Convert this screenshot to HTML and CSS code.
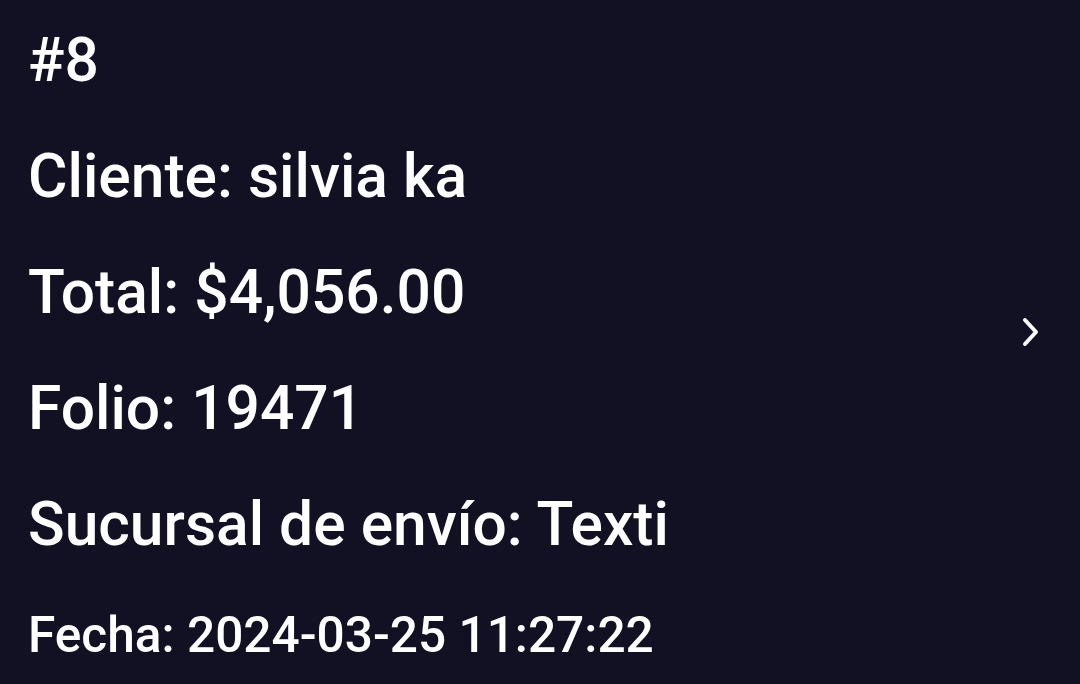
FILE: index.html
```html
<!DOCTYPE html>
<html>
<head>
  <meta charset="UTF-8">
  <link rel="stylesheet" href="styles.css">
</head>
<body>
  <div class="order-tile">
    <div class="order-info">
      <div class="order-line">#8</div>
      <div class="order-line">Cliente: silvia ka</div>
      <div class="order-line">Total: $4,056.00</div>
      <div class="order-line">Folio: 19471</div>
      <div class="order-line">Sucursal de envío: Texti</div>
      <div class="order-date">Fecha: 2024-03-25 11:27:22</div>
    </div>
    <div class="order-arrow">
      <svg width="24" height="36" viewBox="0 0 24 36">
        <polyline points="6,6 17,18 6,30" fill="none" stroke="#ffffff" stroke-width="4" stroke-linecap="round" stroke-linejoin="round"/>
      </svg>
    </div>
  </div>
</body>
</html>
```

FILE: styles.css
```css
body {
  margin: 0;
  padding: 0;
  background-color: #121123;
  color: #ffffff;
  font-family: Roboto, "Noto Sans", sans-serif;
  font-weight: 500;
}

.order-tile {
  display: flex;
  align-items: center;
  height: 684px;
  padding: 0 37px 0 28px;
  box-sizing: border-box;
}

.order-info {
  flex: 1;
  display: flex;
  flex-direction: column;
  padding-top: 3px;
  align-self: flex-start;
}

.order-line {
  font-size: 60.5px;
  line-height: 116px;
  white-space: nowrap;
}

.order-date {
  font-size: 49.6px;
  line-height: 104px;
  white-space: nowrap;
}

.order-arrow {
  display: flex;
  margin-bottom: 20px;
}
```
